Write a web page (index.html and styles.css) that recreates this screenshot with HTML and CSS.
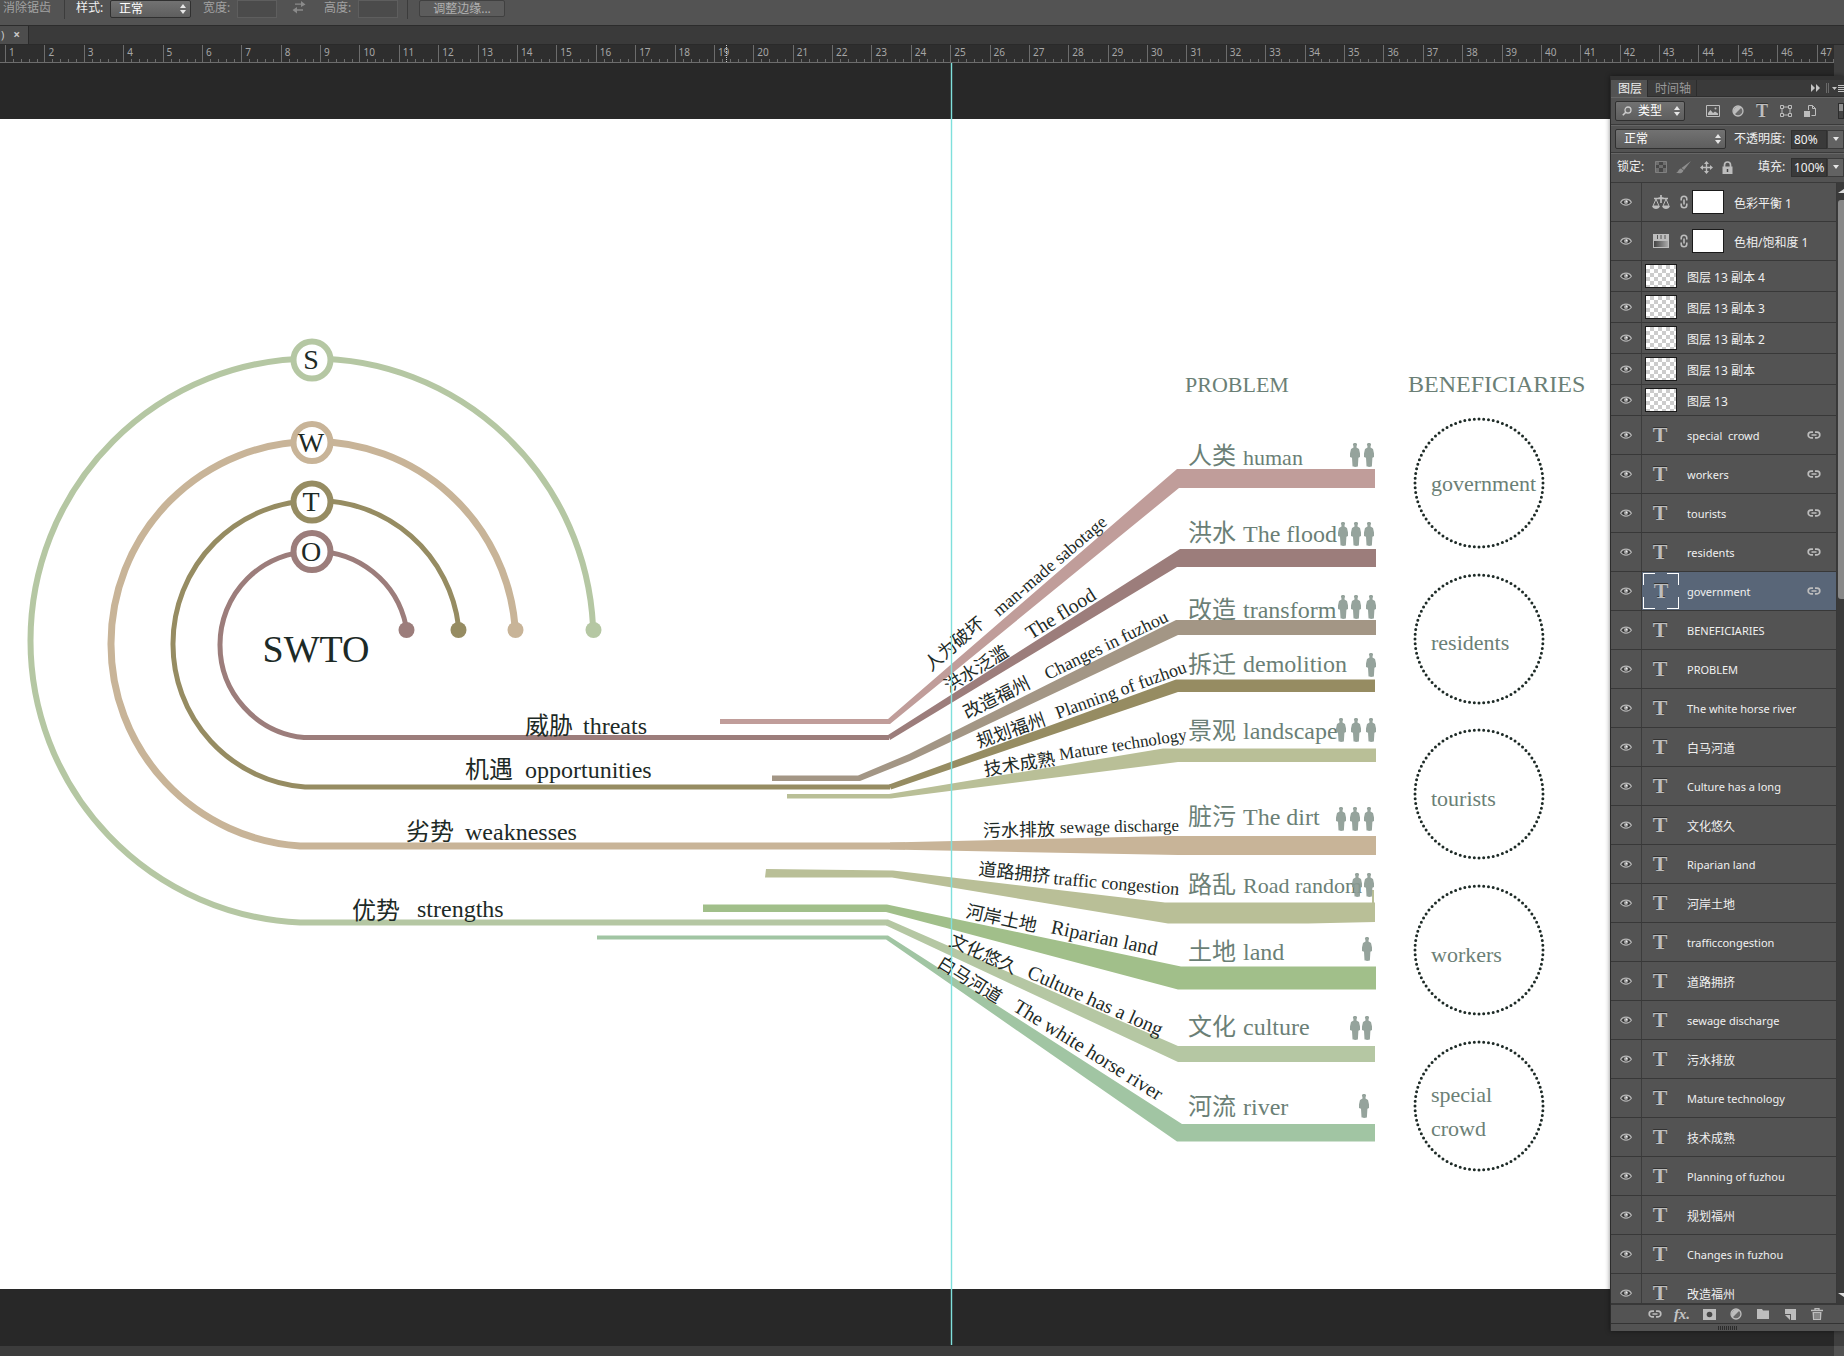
FILE: index.html
```html
<!DOCTYPE html>
<html lang="zh-CN">
<head>
<meta charset="utf-8">
<title>SWTO</title>
<link rel="stylesheet" href="styles.css">
</head>
<body>
<svg class="defs" aria-hidden="true">
  <symbol id="eye" viewBox="0 0 12 8"><path d="M.6 4.2C3 .2 9 .2 11.4 4.2 9 8 3 8 .6 4.2Z" fill="#3a3a3a" stroke="#b4b4b4" stroke-width="1.2"/><circle cx="6" cy="4" r="2" fill="#a8a8a8"/><circle cx="6.6" cy="3.4" r=".8" fill="#eee"/></symbol>
  <symbol id="link" viewBox="0 0 14 8"><path d="M6 1.2H4a2.8 2.8 0 0 0 0 5.6h2M8 1.2h2a2.8 2.8 0 0 1 0 5.6H8M4.5 4h5" fill="none" stroke="#bdbdbd" stroke-width="1.7"/></symbol>
  <symbol id="chain" viewBox="0 0 8 14"><path d="M1.2 5.5V4a2.8 2.8 0 0 1 5.6 0v1.500M1.200 8.500V10a2.800 2.800 0 0 0 5.600 0V8.500M4 4.500v5" fill="none" stroke="#bdbdbd" stroke-width="1.6"/></symbol>
  <symbol id="step" viewBox="0 0 6 10"><path d="M3 0 6 4H0ZM3 10 0 6h6Z" fill="#e6e6e6"/></symbol>
  <symbol id="down" viewBox="0 0 6 4"><path d="M0 0h6L3 4Z" fill="#e6e6e6"/></symbol>
  <symbol id="half" viewBox="0 0 12 12"><circle cx="6" cy="6" r="5" fill="#6a6a6a" stroke="#bdbdbd" stroke-width="1.3"/><path d="M9.500 2.500A5 5 0 0 0 2.500 9.500Z" fill="#bdbdbd"/></symbol>
  <symbol id="person" viewBox="0 0 10 24"><path d="M5 0a1.700 1.700 0 0 1 1.600 2.800L6.500 4.600 9 6 10 10.500V14l-1.600.8L7.900 23c0 1.200-5.400 1.200-5.400 0L2 14.800 0 14v-3.500L1 6l2.500-1.400L3.400 2.800A1.700 1.700 0 0 1 5 0Z" fill="#8a9a92"/></symbol>
</svg>

<header class="options">
  <span class="muted first">消除锯齿</span>
  <i class="sep"></i>
  <label for="style">样式:</label>
  <span class="select style-select"><select id="style"><option>正常</option></select><svg width="6" height="10"><use href="#step"/></svg></span>
  <label class="muted" for="w">宽度:</label>
  <input class="dim" id="w" disabled>
  <svg class="swap" width="14" height="14" viewBox="0 0 14 14"><path d="M3 3.500h6V1l4.500 3.500L9 7V4.800H3ZM11 9.200H5V7L.5 10 5 13.500V10.800h6Z" fill="#8a8a8a"/></svg>
  <label class="muted" for="h">高度:</label>
  <input class="dim" id="h" disabled>
  <i class="sep near"></i>
  <button class="refine" type="button" disabled>调整边缘...</button>
</header>

<nav class="tabs"><div class="tab"><span>)</span><button type="button" aria-label="关闭">×</button></div></nav>

<div class="ruler">
  <div class="units">
    <span>1</span><span>2</span><span>3</span><span>4</span><span>5</span><span>6</span><span>7</span><span>8</span><span>9</span><span>10</span><span>11</span><span>12</span><span>13</span><span>14</span><span>15</span><span>16</span><span>17</span><span>18</span><span>19</span><span>20</span><span>21</span><span>22</span><span>23</span><span>24</span><span>25</span><span>26</span><span>27</span><span>28</span><span>29</span><span>30</span><span>31</span><span>32</span><span>33</span><span>34</span><span>35</span><span>36</span><span>37</span><span>38</span><span>39</span><span>40</span><span>41</span><span>42</span><span>43</span><span>44</span><span>45</span><span>46</span><span>47</span>
  </div>
  <i class="cursor"></i>
</div>

<main class="workspace">
<section class="stage">
<svg class="art" viewBox="0 119 1610 1170" role="img" aria-label="SWTO">
  <rect x="0" y="119" width="1610" height="1170" fill="#fff"/>
  <g fill="none">
    <path d="M593 626A281 282 0 0 0 312 358.500 282 282 0 0 0 30.500 640.500 282 282 0 0 0 300 922.500H888" stroke="#b5c7a3" stroke-width="6"/>
    <path d="M515 626A202 202 0 0 0 313 441.500 202 202 0 0 0 111 644 202 202 0 0 0 300 846H905" stroke="#c8b498" stroke-width="7"/>
    <path d="M458.500 626A143 143 0 0 0 316 500.500 143 143 0 0 0 173 643.500 143 143 0 0 0 305 787H890" stroke="#968c62" stroke-width="5"/>
    <path d="M406 626A93 93 0 0 0 313 551.500 93 93 0 0 0 220 644.500 93 93 0 0 0 304 737.500H889" stroke="#9c7d7b" stroke-width="5"/>
  </g>
  <circle cx="593.500" cy="630" r="8" fill="#b5c7a3"/>
  <circle cx="515.500" cy="630" r="8" fill="#c8b498"/>
  <circle cx="458.500" cy="630" r="8" fill="#968c62"/>
  <circle cx="406.500" cy="630" r="8" fill="#9c7d7b"/>
  <g fill="#fff" stroke-width="6">
    <circle cx="312" cy="360" r="18.500" stroke="#b5c7a3"/>
    <circle cx="312" cy="442.500" r="18.500" stroke="#c8b498"/>
    <circle cx="312" cy="502" r="18.500" stroke="#968c62"/>
    <circle cx="312" cy="551.500" r="18.500" stroke="#9c7d7b"/>
  </g>

  <path d="M720 719H888L1177 469H1375V488H1179L890 724H720Z" fill="#c09d9a"/>
  <path d="M888 735 1180 549H1376V567H1177L890 740Z" fill="#9c7d7b"/>
  <path d="M772 775.500H858L909 754 1176 620H1376V635H1178L910 761 860 781H772Z" fill="#a39685"/>
  <path d="M889 784.500 1176 679.500H1375V692H1178L891 789.500Z" fill="#968c62"/>
  <path d="M787 794H889L1163 748.500H1376V762H1178L891 798.500H787Z" fill="#b9bf97"/>
  <path d="M890 842.500 1170 836H1376V855H1178L890 849.500Z" fill="#c8b498"/>
  <path d="M766 869 893 870.500 1165 902.500H1375V922L1308 923.500H1168L892 877.500H765Z" fill="#b9bf97"/>
  <path d="M1373 890v15" stroke="#b9bf97" stroke-width="2"/>
  <path d="M703 904.500H887L1181 966.500H1376V989.500H1178L886 912H703Z" fill="#a1bf8a"/>
  <path d="M888 919.500 1178 1046H1375V1062H1178L886 925.500Z" fill="#b5c7a3"/>
  <path d="M597 935.500H888L1182 1124H1375V1141.500H1177L886 939.500H597Z" fill="#a1c5a3"/>

  <g class="ink letter">
    <text x="311" y="369">S</text><text x="311" y="452">W</text><text x="311" y="511">T</text><text x="311" y="561">O</text>
  </g>
  <text class="ink title" x="316" y="662">SWTO</text>
  <g class="ink group">
    <text x="525" y="734">威胁</text><text x="583" y="734">threats</text>
    <text x="465" y="778">机遇</text><text x="525" y="778">opportunities</text>
    <text x="406" y="840">劣势</text><text x="465" y="840">weaknesses</text>
    <text x="352" y="919">优势</text><text x="417" y="917">strengths</text>
  </g>

  <g class="ink branch">
    <text transform="translate(931 672) rotate(-40.500)">人为破坏</text><text transform="translate(999 617) rotate(-40.500)">man-made sabotage</text>
    <text transform="translate(949 693) rotate(-32)">洪水泛滥</text><text class="wide" transform="translate(1031 640) rotate(-32)">The flood</text>
    <text transform="translate(967 719) rotate(-26)">改造福州</text><text transform="translate(1048 680) rotate(-26)">Changes in fuzhou</text>
    <text transform="translate(979 748) rotate(-19)">规划福州</text><text transform="translate(1058 719) rotate(-20)">Planning of fuzhou</text>
    <text transform="translate(985 776) rotate(-9)">技术成熟</text><text class="narrow" transform="translate(1060 760) rotate(-9)">Mature technology</text>
    <text transform="translate(983 837) rotate(-1)">污水排放</text><text class="narrow" transform="translate(1060 833) rotate(-1)">sewage discharge</text>
    <text transform="translate(978 875) rotate(6)">道路拥挤</text><text transform="translate(1053 884) rotate(5)">traffic congestion</text>
    <text transform="translate(965 917) rotate(12)">河岸土地</text><text class="wide" transform="translate(1050 933) rotate(12)">Riparian land</text>
    <text transform="translate(948 945) rotate(24)">文化悠久</text><text class="wide" transform="translate(1026 977) rotate(24)">Culture has a long</text>
    <text transform="translate(936 966) rotate(32)">白马河道</text><text class="wide" transform="translate(1012 1010) rotate(32)">The white horse river</text>
  </g>

  <g class="sage heading"><text class="snug" x="1185" y="392">PROBLEM</text><text x="1408" y="392">BENEFICIARIES</text></g>
  <g class="sage problem">
    <text x="1188" y="464">人类</text><text class="snug" x="1243" y="465">human</text>
    <text x="1188" y="541">洪水</text><text x="1243" y="542">The flood</text>
    <text x="1188" y="618">改造</text><text x="1243" y="618">transform</text>
    <text x="1188" y="673">拆迁</text><text x="1243" y="672">demolition</text>
    <text x="1188" y="739">景观</text><text x="1243" y="739">landscape</text>
    <text x="1188" y="825">脏污</text><text x="1243" y="825">The dirt</text>
    <text x="1188" y="893">路乱</text><text class="snug" x="1243" y="893">Road random</text>
    <text x="1188" y="960">土地</text><text x="1243" y="960">land</text>
    <text x="1188" y="1035">文化</text><text x="1243" y="1035">culture</text>
    <text x="1188" y="1115">河流</text><text x="1243" y="1115">river</text>
  </g>
  <g class="people">
    <use href="#person" x="1350" y="443" width="10" height="24"/><use href="#person" x="1364" y="443" width="10" height="24"/>
    <use href="#person" x="1338" y="522" width="10" height="24"/><use href="#person" x="1351" y="522" width="10" height="24"/><use href="#person" x="1364" y="522" width="10" height="24"/>
    <use href="#person" x="1338" y="595" width="10" height="24"/><use href="#person" x="1351" y="595" width="10" height="24"/><use href="#person" x="1366" y="595" width="10" height="24"/>
    <use href="#person" x="1366" y="653" width="10" height="24"/>
    <use href="#person" x="1336" y="718" width="10" height="24"/><use href="#person" x="1351" y="718" width="10" height="24"/><use href="#person" x="1366" y="718" width="10" height="24"/>
    <use href="#person" x="1336" y="807" width="10" height="24"/><use href="#person" x="1350" y="807" width="10" height="24"/><use href="#person" x="1364" y="807" width="10" height="24"/>
    <use href="#person" x="1352" y="873" width="10" height="24"/><use href="#person" x="1364" y="873" width="10" height="24"/>
    <use href="#person" x="1362" y="937" width="10" height="24"/>
    <use href="#person" x="1350" y="1016" width="10" height="24"/><use href="#person" x="1362" y="1016" width="10" height="24"/>
    <use href="#person" x="1359" y="1094" width="10" height="24"/>
  </g>
  <g class="dots">
    <circle cx="1479" cy="483" r="64" pathLength="84"/><circle cx="1479" cy="639" r="64" pathLength="84"/><circle cx="1479" cy="794" r="64" pathLength="84"/><circle cx="1479" cy="950" r="64" pathLength="84"/><circle cx="1479" cy="1106" r="64" pathLength="84"/>
  </g>
  <g class="sage who">
    <text x="1431" y="491">government</text><text x="1431" y="650">residents</text><text x="1431" y="806">tourists</text><text x="1431" y="962">workers</text><text x="1431" y="1102">special</text><text x="1431" y="1136">crowd</text>
  </g>
  <path d="M951.500 63V1345" stroke="#7fe0dc" stroke-width="1.400"/>
</svg>
</section>

<aside class="panel">
  <div class="panel-tabs">
    <button class="on" type="button">图层</button><button type="button">时间轴</button>
    <svg class="panel-menu" width="34" height="10" viewBox="0 0 34 10"><path d="M1 1l4 4-4 4ZM6 1l4 4-4 4ZM22 4h5l-2.500 3Z" fill="#c4c4c4"/><path d="M16.500 0v10M18.500 0v10" stroke="#6a6a6a"/><path d="M28 2.500h6M28 4.500h6M28 6.500h6M28 8.500h6" stroke="#c4c4c4"/></svg>
  </div>
  <div class="bar filter">
    <span class="select kind"><svg class="lens" width="10" height="10" viewBox="0 0 10 10"><circle cx="6" cy="4" r="3" fill="none" stroke="#ccc" stroke-width="1.300"/><path d="M4 6 .8 9.300" stroke="#ccc" stroke-width="1.600"/></svg><select aria-label="类型"><option>类型</option></select><svg width="6" height="10"><use href="#step"/></svg></span>
    <span class="kinds">
      <svg width="14" height="12" viewBox="0 0 14 12"><path d="M.5.5h13v11H.5Z" fill="none" stroke="#bdbdbd"/><path d="M2 10V8l2.500-3L7 8l2-1.500 3 2V10Z" fill="#bdbdbd"/><circle cx="9.500" cy="3.500" r="1" fill="#bdbdbd"/></svg>
      <svg width="12" height="12"><use href="#half"/></svg>
      <b class="type small">T</b>
      <svg width="12" height="12" viewBox="0 0 12 12"><path d="M2 2h8v8H2Z" fill="none" stroke="#bdbdbd"/><g fill="#535353" stroke="#bdbdbd"><path d="M.5.500h3v3h-3ZM8.500.500h3v3h-3ZM.5 8.500h3v3h-3ZM8.500 8.500h3v3h-3Z"/></g></svg>
      <svg width="12" height="12" viewBox="0 0 12 12"><path d="M4.500 5V.5h4l3 3v7h-4M8.500.500v3h3" fill="none" stroke="#bdbdbd"/><path d="M0 6h6v6H0Z" fill="#bdbdbd"/></svg>
    </span>
    <i class="switch"></i>
  </div>
  <div class="bar">
    <span class="select blend"><select aria-label="混合模式"><option>正常</option></select><svg width="6" height="10"><use href="#step"/></svg></span>
    <label for="op">不透明度:</label><input id="op" value="80%"><button class="drop" type="button" aria-label="不透明度"><svg width="6" height="4"><use href="#down"/></svg></button>
  </div>
  <div class="bar lock">
    <span>锁定:</span>
    <span class="locks">
      <svg width="12" height="12" viewBox="0 0 12 12"><path d="M.5.500h11v11H.5Z" fill="#6e6e6e" stroke="#808080"/><path d="M1 4h3v3H1ZM4 1h4v3H4ZM8 4h3v3H8ZM4 7h4v4H4Z" fill="#484848"/></svg>
      <svg width="15" height="13" viewBox="0 0 15 13"><path d="M15 0 8 9 5.500 7ZM5 7.500 7.500 9.500C6.500 12.500 3 13 0 11.500 2.500 11.500 2.500 7.500 5 7.500Z" fill="#8e8e8e"/></svg>
      <svg width="13" height="13" viewBox="0 0 13 13"><path d="M6.500 0 9 3H7.200v2.800H10V4l3 2.500L10 9V7.200H7.200V10H9l-2.500 3L4 10h1.800V7.200H3V9L0 6.500 3 4v1.800h2.800V3H4Z" fill="#bdbdbd"/></svg>
      <svg width="11" height="13" viewBox="0 0 11 13"><path d="M2.500 6V4a3 3 0 0 1 6 0v2" fill="none" stroke="#bdbdbd" stroke-width="1.700"/><path d="M.5 5.500h10V13H.5Z" fill="#bdbdbd"/><path d="M5.500 8v3" stroke="#444" stroke-width="1.500"/></svg>
    </span>
    <label for="fill">填充:</label><input id="fill" value="100%"><button class="drop" type="button" aria-label="填充"><svg width="6" height="4"><use href="#down"/></svg></button>
  </div>

  <div class="list">
    <ul>
      <li class="zh"><span class="eye"><svg><use href="#eye"/></svg></span><span class="adj"><svg width="18" height="15" viewBox="0 0 18 15"><path d="M2 3.500h14M9 0v8M6.500 3h5" stroke="#bdbdbd" stroke-width="1.700"/><path d="M4 4 1 11h6ZM14 4l-3 7h6Z" fill="none" stroke="#bdbdbd"/><path d="M0 11h8c-1 4-7 4-8 0ZM10 11h8c-1 4-7 4-8 0Z" fill="#bdbdbd"/></svg><svg width="8" height="14"><use href="#chain"/></svg><i class="mask"></i></span><span class="name">色彩平衡 1</span></li>
      <li class="zh"><span class="eye"><svg><use href="#eye"/></svg></span><span class="adj"><svg width="18" height="14" viewBox="0 0 18 14"><defs><linearGradient id="ramp"><stop stop-color="#444"/><stop offset="1" stop-color="#aaa"/></linearGradient></defs><path d="M1 0h16v14H1Z" fill="#bdbdbd"/><path d="M5.500 1v4M9 1v4M13 1v4" stroke="#555"/><path d="M2 7h14v6H2Z" fill="url(#ramp)"/></svg><svg width="8" height="14"><use href="#chain"/></svg><i class="mask"></i></span><span class="name">色相/饱和度 1</span></li>
      <li class="zh px"><span class="eye"><svg><use href="#eye"/></svg></span><i class="thumb"></i><span class="name">图层 13 副本 4</span></li>
      <li class="zh px"><span class="eye"><svg><use href="#eye"/></svg></span><i class="thumb"></i><span class="name">图层 13 副本 3</span></li>
      <li class="zh px"><span class="eye"><svg><use href="#eye"/></svg></span><i class="thumb"></i><span class="name">图层 13 副本 2</span></li>
      <li class="zh px"><span class="eye"><svg><use href="#eye"/></svg></span><i class="thumb"></i><span class="name">图层 13 副本</span></li>
      <li class="zh px"><span class="eye"><svg><use href="#eye"/></svg></span><i class="thumb"></i><span class="name">图层 13</span></li>
      <li><span class="eye"><svg><use href="#eye"/></svg></span><b class="type">T</b><span class="name">special&nbsp; crowd</span><svg class="linked"><use href="#link"/></svg></li>
      <li><span class="eye"><svg><use href="#eye"/></svg></span><b class="type">T</b><span class="name">workers</span><svg class="linked"><use href="#link"/></svg></li>
      <li><span class="eye"><svg><use href="#eye"/></svg></span><b class="type">T</b><span class="name">tourists</span><svg class="linked"><use href="#link"/></svg></li>
      <li><span class="eye"><svg><use href="#eye"/></svg></span><b class="type">T</b><span class="name">residents</span><svg class="linked"><use href="#link"/></svg></li>
      <li class="selected"><span class="eye"><svg><use href="#eye"/></svg></span><b class="type">T</b><span class="name">government</span><svg class="linked"><use href="#link"/></svg></li>
      <li><span class="eye"><svg><use href="#eye"/></svg></span><b class="type">T</b><span class="name">BENEFICIARIES</span></li>
      <li><span class="eye"><svg><use href="#eye"/></svg></span><b class="type">T</b><span class="name">PROBLEM</span></li>
      <li><span class="eye"><svg><use href="#eye"/></svg></span><b class="type">T</b><span class="name">The white horse river</span></li>
      <li class="zh"><span class="eye"><svg><use href="#eye"/></svg></span><b class="type">T</b><span class="name">白马河道</span></li>
      <li><span class="eye"><svg><use href="#eye"/></svg></span><b class="type">T</b><span class="name">Culture has a long</span></li>
      <li class="zh"><span class="eye"><svg><use href="#eye"/></svg></span><b class="type">T</b><span class="name">文化悠久</span></li>
      <li><span class="eye"><svg><use href="#eye"/></svg></span><b class="type">T</b><span class="name">Riparian land</span></li>
      <li class="zh"><span class="eye"><svg><use href="#eye"/></svg></span><b class="type">T</b><span class="name">河岸土地</span></li>
      <li><span class="eye"><svg><use href="#eye"/></svg></span><b class="type">T</b><span class="name">trafficcongestion</span></li>
      <li class="zh"><span class="eye"><svg><use href="#eye"/></svg></span><b class="type">T</b><span class="name">道路拥挤</span></li>
      <li><span class="eye"><svg><use href="#eye"/></svg></span><b class="type">T</b><span class="name">sewage discharge</span></li>
      <li class="zh"><span class="eye"><svg><use href="#eye"/></svg></span><b class="type">T</b><span class="name">污水排放</span></li>
      <li><span class="eye"><svg><use href="#eye"/></svg></span><b class="type">T</b><span class="name">Mature technology</span></li>
      <li class="zh"><span class="eye"><svg><use href="#eye"/></svg></span><b class="type">T</b><span class="name">技术成熟</span></li>
      <li><span class="eye"><svg><use href="#eye"/></svg></span><b class="type">T</b><span class="name">Planning of fuzhou</span></li>
      <li class="zh"><span class="eye"><svg><use href="#eye"/></svg></span><b class="type">T</b><span class="name">规划福州</span></li>
      <li><span class="eye"><svg><use href="#eye"/></svg></span><b class="type">T</b><span class="name">Changes in fuzhou</span></li>
      <li class="zh"><span class="eye"><svg><use href="#eye"/></svg></span><b class="type">T</b><span class="name">改造福州</span></li>
    </ul>
    <div class="scroll"><svg width="6" height="4" viewBox="0 0 6 4"><path d="M0 4 6 0v4Z" fill="#ddd"/></svg><i class="knob"></i><svg class="end" width="6" height="4" viewBox="0 0 6 4"><path d="M0 0h6v4Z" fill="#ddd"/></svg></div>
  </div>

  <div class="tools">
    <button type="button" aria-label="链接图层"><svg width="14" height="8"><use href="#link"/></svg></button>
    <button type="button" class="fx">fx.</button>
    <button type="button" aria-label="蒙版"><svg width="13" height="11" viewBox="0 0 13 11"><path d="M0 0h13v11H0Z" fill="#bdbdbd"/><circle cx="6.500" cy="5.500" r="2.800" fill="#484848"/></svg></button>
    <button type="button" aria-label="调整图层"><svg width="12" height="12"><use href="#half"/></svg></button>
    <button type="button" aria-label="新建组"><svg width="12" height="10" viewBox="0 0 12 10"><path d="M0 0h5l1 1.500h6V10H0Z" fill="#bdbdbd"/></svg></button>
    <button type="button" aria-label="新建图层"><svg width="11" height="11" viewBox="0 0 11 11"><path d="M0 0h11v11H6V5H0Z" fill="#bdbdbd"/><path d="M0 6h5v5Z" fill="#bdbdbd"/></svg></button>
    <button type="button" aria-label="删除图层"><svg width="12" height="12" viewBox="0 0 12 12"><path d="M0 2.500h12M4 2V.7h4V2" fill="none" stroke="#bdbdbd" stroke-width="1.300"/><path d="M1.500 4h9L10 12H2Z" fill="#bdbdbd"/><path d="M4 5v6M6 5v6M8 5v6" stroke="#535353"/></svg></button>
  </div>
  <div class="grip"><i></i></div>
</aside>
</main>
<footer class="status"></footer>
</body>
</html>
```

FILE: styles.css
```css
* { box-sizing: border-box; }
body {
  margin: 0;
  min-height: 100vh;
  display: flex;
  flex-direction: column;
  overflow-x: hidden;
  background: #282828;
  color: #f0f0f0;
  font: 12px/16px "Noto Sans", "Noto Sans CJK SC", sans-serif;
}
.defs { position: absolute; width: 0; height: 0; }
svg { flex: none; }
i { font-style: normal; flex: none; }
button, input, select { font: inherit; color: inherit; margin: 0; padding: 0; border: 0; background: none; border-radius: 0; }
select { appearance: none; width: 100%; height: 100%; }

.select {
  display: flex;
  align-items: center;
  flex: none;
  padding: 0 4px 0 8px;
  border: 1px solid #303030;
  border-radius: 2px;
  background: linear-gradient(#727272, #5e5e5e);
  color: #fff;
}

/* options bar */
.options {
  flex: none;
  display: flex;
  align-items: flex-start;
  height: 26px;
  line-height: 16px;
  background: #535353;
  border-bottom: 1px solid #2c2c2c;
  white-space: nowrap;
}
.options .muted { color: #a2a2a2; }
.first { width: 60px; padding-left: 3px; }
.sep { width: 1px; height: 19px; margin: 0 11px 0 4px; background: #3c3c3c; }
.sep.near { margin: 0 11px 0 9px; }
.options label { width: 34px; }
.style-select { width: 81px; height: 18px; margin-right: 12px; }
.dim { width: 40px; height: 18px; background: #4b4b4b; border: 1px solid #5e5e5e; }
.swap { margin: 0 18px 0 15px; }
.refine { width: 86px; height: 17px; line-height: 14px; border: 1px solid #404040; border-radius: 2px; background: #5c5c5c; color: #b0b0b0; }

/* document tabs */
.tabs { flex: none; height: 19px; display: flex; background: #3a3a3a; border-bottom: 1px solid #2a2a2a; }
.tab { display: flex; align-items: center; gap: 9px; width: 29px; padding-left: 1px; background: #4d4d4d; border-right: 1px solid #2a2a2a; color: #c8c8c8; font-size: 11px; }
.tab button { font-weight: bold; font-size: 12px; }

/* ruler */
.ruler { position: relative; flex: none; height: 18px; margin-right: 10px; padding-left: 5px; overflow: hidden; background: #2e2e2e; border-bottom: 1px solid #6c6c6c; box-shadow: 10px 0 #3f3f3f; }
.units { display: grid; grid-template-columns: repeat(47, 1fr); width: 1851px; height: 17px; }
.units span {
  border-left: 1px solid #6c6c6c;
  padding-left: 3px;
  color: #a6a6a6;
  font-size: 10px;
  line-height: 15px;
  background: repeating-linear-gradient(to right, transparent 0 7px, #6c6c6c 7px 8px) 0 100% / 37px 3px no-repeat;
}
.cursor { position: absolute; left: 726px; top: 0; height: 17px; border-left: 1px dotted #ccc; }

/* workspace */
.workspace { flex: 1; display: flex; background: linear-gradient(to left, #3f3f3f 10px, #282828 10px); }
.stage { flex: 1; min-width: 0; padding-top: 56px; }
.art { display: block; width: 100%; overflow: visible; }
.art text { font-family: "Liberation Serif", "Noto Sans CJK SC", serif; white-space: pre; }
.ink { fill: #1d2a26; }
.sage { fill: #6b7f76; }
.letter { font-size: 28px; text-anchor: middle; }
.title { font-size: 38px; text-anchor: middle; }
.group, .heading, .problem { font-size: 24px; }
.branch { font-size: 18px; }
.branch .wide { font-size: 20px; }
.branch .narrow { font-size: 17px; }
.snug, .who { font-size: 22px; }
.people { opacity: .9; }
.dots { fill: none; stroke: #1d2a26; stroke-width: 3; stroke-linecap: round; stroke-dasharray: 0 1; }

/* layers panel */
.panel {
  position: relative;
  flex: none;
  width: 234px;
  margin: 13px 0 15px;
  display: flex;
  flex-direction: column;
  overflow: clip;
  overflow-clip-margin: 6px;
  background: #535353;
  border-left: 1px solid #2c2c2c;
  border-top: 4px solid #333;
  box-shadow: 0 0 5px rgba(0, 0, 0, .45);
}
.panel-tabs { display: flex; height: 17px; background: #3a3a3a; border-bottom: 1px solid #2e2e2e; line-height: 18px; }
.panel-tabs button { padding: 0 5px 0 7px; color: #999; border-right: 1px solid #2c2c2c; }
.panel-tabs .on { height: 17px; background: #535353; color: #eee; }
.panel-menu { margin: 3px 0 0 auto; }
.bar { display: flex; align-items: center; height: 28px; padding-left: 4px; border-top: 1px solid #666; border-bottom: 1px solid #3a3a3a; white-space: nowrap; }
.kind { width: 70px; height: 20px; padding-left: 6px; gap: 6px; }
.kinds { display: flex; align-items: center; gap: 12px; margin-left: 21px; }
.kinds .small { font-size: 18px; width: 12px; }
.switch { width: 6px; height: 16px; margin-left: auto; border: 1px solid #2c2c2c; background: linear-gradient(#909090 50%, #444 50%); }
.blend { width: 111px; height: 20px; }
.bar label { margin-left: auto; width: 57px; }
.bar input { width: 36px; height: 19px; padding-left: 2px; background: #3a3a3a; border: 1px solid #303030; font-size: 12px; }
.drop { width: 17px; height: 19px; display: flex; align-items: center; justify-content: center; border: 1px solid #3a3a3a; background: #626262; }
.bar.lock { height: 30px; padding-left: 6px; padding-bottom: 2px; }
.locks { display: flex; align-items: center; gap: 9px; margin-left: 11px; }
.lock label { width: 33px; }

.list { flex: 1; display: flex; contain: size; overflow: hidden; }
.list ul { flex: 1; margin: 0; padding: 0; list-style: none; }
.list li { display: flex; align-items: center; height: 39px; padding-right: 15px; border-bottom: 1px solid #383838; font-size: 11px; }
.list .zh { font-size: 12px; }
.list .px { height: 31px; }
.eye { display: flex; align-items: center; justify-content: center; align-self: stretch; width: 31px; border-right: 1px solid #3c3c3c; background: #535353; }
.eye svg { width: 12px; height: 8px; }
.type { width: 36px; margin-right: 9px; text-align: center; color: #bdbdbd; font: bold 22px/30px "Liberation Serif", serif; text-shadow: 0 -1px #333; }
.kinds .type { margin: 0; line-height: 20px; }
.name { flex: 1; white-space: nowrap; padding-top: 2px; }
.zh .name { padding-top: 4px; }
.linked { width: 14px; height: 8px; }
.adj { display: flex; align-items: center; gap: 6px; margin: 0 10px; }
.adj svg + svg { margin-left: 4px; margin-right: -2px; }
.mask { width: 32px; height: 24px; background: #fff; border: 1px solid #1a1a1a; }
.thumb { width: 32px; height: 24px; margin: 0 10px 0 3px; border: 1px solid #1a1a1a; background: repeating-conic-gradient(#ccc 0 25%, #fff 0 50%) 0 0 / 8px 8px; }
.selected { background: #596678; }
.selected .type {
  width: 36px;
  height: 36px;
  line-height: 36px;
  margin-left: 1px;
  margin-right: 8px;
  background:
    linear-gradient(#fff 0 0) 0 0 / 12px 1px, linear-gradient(#fff 0 0) 0 0 / 1px 12px,
    linear-gradient(#fff 0 0) 100% 0 / 12px 1px, linear-gradient(#fff 0 0) 100% 0 / 1px 12px,
    linear-gradient(#fff 0 0) 0 100% / 12px 1px, linear-gradient(#fff 0 0) 0 100% / 1px 12px,
    linear-gradient(#fff 0 0) 100% 100% / 12px 1px, linear-gradient(#fff 0 0) 100% 100% / 1px 12px;
  background-repeat: no-repeat;
}
.scroll { width: 8px; display: flex; flex-direction: column; align-items: flex-end; padding: 6px 0; background: #3a3a3a; border-left: 1px solid #383838; }
.knob { width: 6px; height: 36%; margin-top: 7px; background: #888; border-radius: 3px 0 0 3px; }
.end { margin-top: auto; }

.tools { display: flex; align-items: center; justify-content: space-between; height: 20px; padding: 0 15px 0 32px; border-top: 2px solid #383838; }
.tools button { display: flex; align-items: center; justify-content: center; width: 24px; height: 18px; }
.fx { color: #c4c4c4; font: italic bold 15px/18px "Liberation Serif", serif; }
.grip { display: flex; justify-content: center; align-items: center; height: 8px; border-top: 1px solid #333; }
.grip i { width: 20px; height: 4px; background: repeating-linear-gradient(to right, #2c2c2c 0 1px, transparent 1px 2px); }

.status { flex: none; height: 10px; background: linear-gradient(to left, #535353 10px, #3c3c3c 10px); }
```
